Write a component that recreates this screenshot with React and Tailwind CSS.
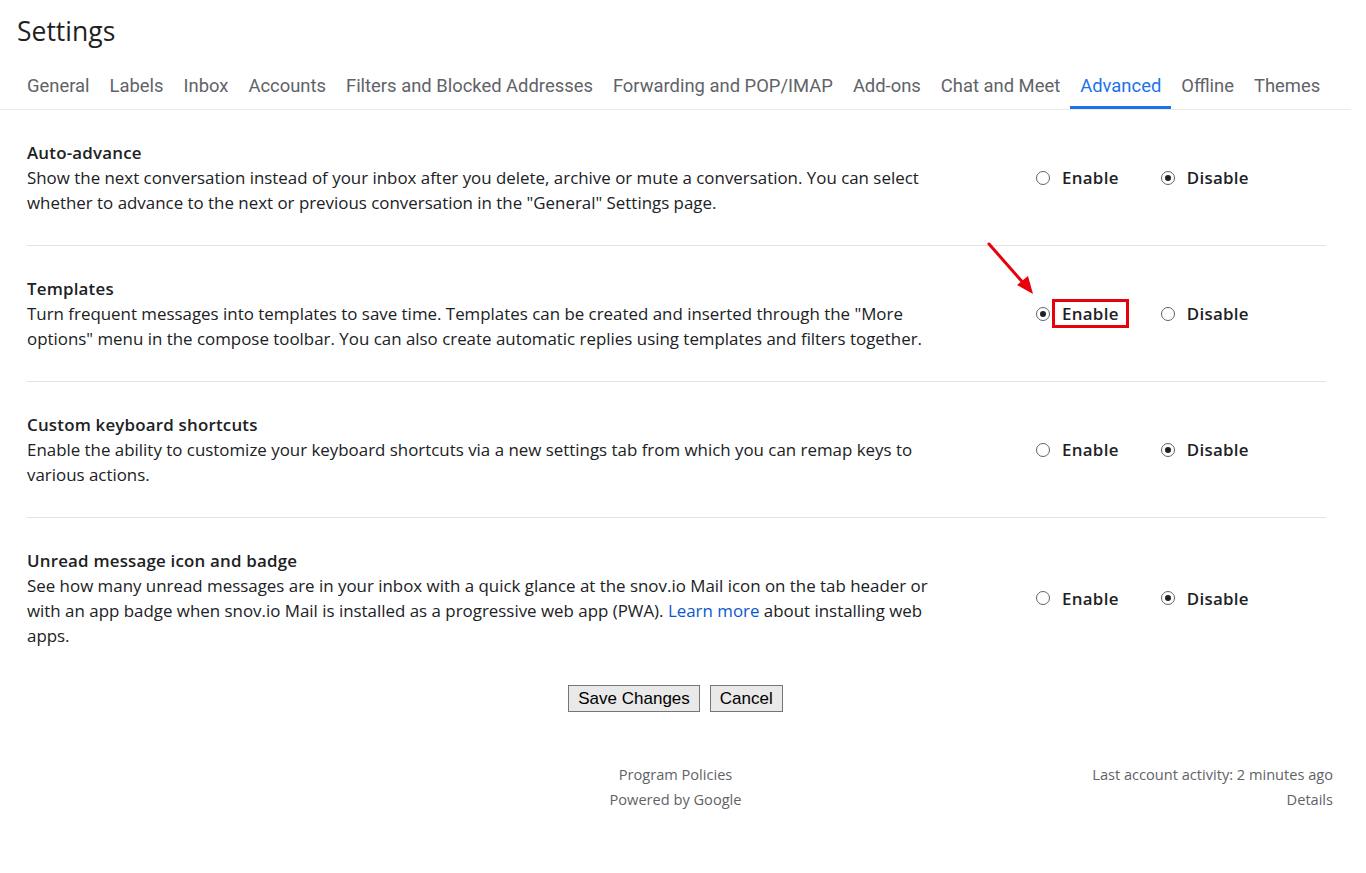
import React from 'react';

const tabs = [
  'General',
  'Labels',
  'Inbox',
  'Accounts',
  'Filters and Blocked Addresses',
  'Forwarding and POP/IMAP',
  'Add-ons',
  'Chat and Meet',
  'Advanced',
  'Offline',
  'Themes',
];

const settings = [
  {
    id: 'auto-advance',
    title: 'Auto-advance',
    body: (
      <>
        Show the next conversation instead of your inbox after you delete, archive or mute a conversation. You can select
        whether to advance to the next or previous conversation in the "General" Settings page.
      </>
    ),
    value: 'disable',
  },
  {
    id: 'templates',
    title: 'Templates',
    body: (
      <>
        Turn frequent messages into templates to save time. Templates can be created and inserted through the "More
        options" menu in the compose toolbar. You can also create automatic replies using templates and filters together.
      </>
    ),
    value: 'enable',
    highlight: true,
  },
  {
    id: 'shortcuts',
    title: 'Custom keyboard shortcuts',
    body: (
      <>
        Enable the ability to customize your keyboard shortcuts via a new settings tab from which you can remap keys to
        various actions.
      </>
    ),
    value: 'disable',
  },
  {
    id: 'unread-badge',
    title: 'Unread message icon and badge',
    body: (
      <>
        See how many unread messages are in your inbox with a quick glance at the snov.io Mail icon on the tab header or
        with an app badge when snov.io Mail is installed as a progressive web app (PWA).{' '}
        <a href="#" className="text-[#0b57d0]">Learn more</a> about installing web apps.
      </>
    ),
    value: 'disable',
  },
];

const Radio = ({ checked }) => (
  <span className="inline-flex h-[14px] w-[14px] shrink-0 items-center justify-center rounded-full border border-[#5f6368] bg-white">
    {checked && <span className="h-[6px] w-[6px] rounded-full bg-[#202124]" />}
  </span>
);

const Option = ({ label, checked, boxed }) => (
  <label className="flex items-center">
    <Radio checked={checked} />
    <span
      className={`ml-[4px] px-[8px] font-semibold tracking-[0.3px] text-[#202124] ${
        boxed ? 'outline-[3px] outline-solid outline-[#e8000b] -outline-offset-[1px]' : ''
      }`}
    >
      {label}
    </span>
  </label>
);

const SettingRow = ({ item, last }) => (
  <div className={`flex items-center py-[30px] ${last ? '' : 'border-b border-[#e3e3e3]'}`}>
    <div className="w-[905px] shrink-0">
      <div className="font-semibold tracking-[0.2px] text-[#202124]">{item.title}</div>
      <div className="text-[#202124]">{item.body}</div>
    </div>
    <div className="relative ml-[104px] flex items-center gap-[34px]">
      {item.highlight && (
        <svg className="absolute left-[-50px] top-[-60px]" width="52" height="58" viewBox="0 0 52 58">
          <line x1="3" y1="3" x2="40" y2="45" stroke="#e8000b" strokeWidth="3" strokeLinecap="round" />
          <polygon points="47,53 31,44 42,35" fill="#e8000b" />
        </svg>
      )}
      <Option label="Enable" checked={item.value === 'enable'} boxed={item.highlight} />
      <Option label="Disable" checked={item.value === 'disable'} />
    </div>
  </div>
);

export default function App() {
  return (
    <div className="min-h-[873px] w-[1351px] bg-white font-['Open_Sans',sans-serif] text-[16.9px] leading-[25px] text-[#202124]">
      <h1 className="px-[17px] pt-[14px] text-[26.5px] leading-[34px] text-[#1f1f1f]">Settings</h1>

      <nav className="mt-[26px] flex border-b border-[#e8eaed] px-[17px]">
        {tabs.map((tab) => {
          const active = tab === 'Advanced';
          return (
            <a
              key={tab}
              href="#"
              className={`shrink-0 whitespace-nowrap px-[10px] pb-[8px] font-['Roboto',sans-serif] text-[18.4px] leading-[24px] ${
                active ? 'border-b-[3px] border-[#1a73e8] pb-[5px] text-[#1a73e8]' : 'text-[#5f6368]'
              }`}
            >
              {tab}
            </a>
          );
        })}
      </nav>

      <div className="pl-[27px] pr-[25px]">
        {settings.map((item, i) => (
          <SettingRow key={item.id} item={item} last={i === settings.length - 1} />
        ))}
      </div>

      <div className="flex justify-center gap-[10px] pt-[7px]">
        <button className="border border-[#767676] bg-[#e9e9e9] px-[9px] font-['Liberation_Sans',sans-serif] text-[17px] leading-[25px] text-black">
          Save Changes
        </button>
        <button className="border border-[#767676] bg-[#e9e9e9] px-[9px] font-['Liberation_Sans',sans-serif] text-[17px] leading-[25px] text-black">
          Cancel
        </button>
      </div>

      <footer className="mt-[50px] flex px-[18px] text-[14.6px] leading-[25px] text-[#5f6368]">
        <div className="flex-1" />
        <div className="flex flex-col items-center">
          <a href="#">Program Policies</a>
          <a href="#">Powered by Google</a>
        </div>
        <div className="flex flex-1 flex-col items-end">
          <span>Last account activity: 2 minutes ago</span>
          <a href="#">Details</a>
        </div>
      </footer>
    </div>
  );
}
